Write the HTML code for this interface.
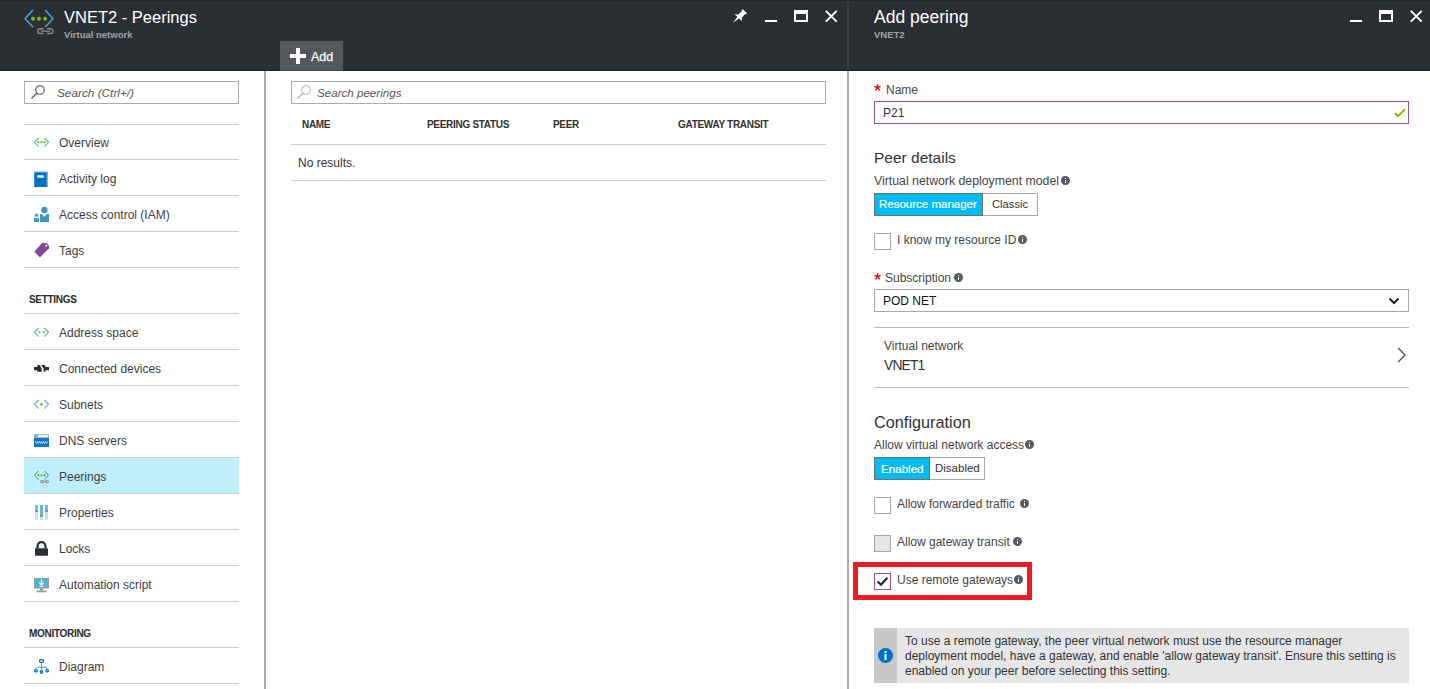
<!DOCTYPE html>
<html><head><meta charset="utf-8">
<style>
html,body{margin:0;padding:0;}
body{width:1430px;height:689px;overflow:hidden;position:relative;background:#fff;font-family:"Liberation Sans",sans-serif;color:#333;}
.a{position:absolute;}
.t{position:absolute;white-space:pre;line-height:normal;}
.hdr{left:0;top:0;width:1430px;height:71px;background:#2b2f34;}
.sep{position:absolute;height:1px;background:#cdcdcd;}
.mi{font-size:12px;color:#3e3e3e;left:59px;}
.sec{font-size:10px;font-weight:bold;color:#2a2a2a;left:29px;letter-spacing:-0.3px}
.th{font-size:10px;font-weight:bold;color:#323232;letter-spacing:-0.3px}
.lbl{font-size:12px;color:#444;}
.info{position:absolute;width:9px;height:9px;border-radius:50%;background:#59595e;}
.info:before{content:"";position:absolute;left:4px;top:2px;width:1px;height:1px;background:#fff;}
.info:after{content:"";position:absolute;left:4px;top:4px;width:1px;height:3px;background:#fff;}
.cb{position:absolute;width:15px;height:15px;border:1px solid #a7a7a7;background:#fff;}
</style></head><body>
<!-- header band -->
<div class="a hdr"></div>
<div class="a" style="left:847px;top:0;width:2px;height:71px;background:#3a3e43"></div>

<!-- left blade header -->
<svg class="a" style="left:20px;top:5px" width="40" height="35" viewBox="0 0 40 35">
  <polyline points="13,5.1 5,13.7 13,22.1" fill="none" stroke="#3fa9db" stroke-width="1.5"/>
  <polyline points="25.2,5.1 33,13.7 25.2,22.1" fill="none" stroke="#3fa9db" stroke-width="1.5"/>
  <circle cx="13" cy="13.7" r="2" fill="#7fba00"/>
  <circle cx="18.9" cy="13.7" r="2" fill="#7fba00"/>
  <circle cx="25.1" cy="13.7" r="2" fill="#7fba00"/>
  <path d="M23.6 23.8 H20 A2.35 2.35 0 0 0 20 28.5 H23.6" fill="none" stroke="#8c8c8c" stroke-width="1.4"/>
  <path d="M27 23.8 H30.6 A2.35 2.35 0 0 1 30.6 28.5 H27" fill="none" stroke="#8c8c8c" stroke-width="1.4"/>
  <rect x="21" y="25.5" width="9" height="1.3" fill="#8c8c8c"/>
</svg>
<div class="t" style="left:64px;top:8px;font-size:16.5px;color:#fff">VNET2 - Peerings</div>
<div class="t" style="left:64px;top:29px;font-size:9.5px;font-weight:bold;color:#9ea3a8">Virtual network</div>

<!-- window icons left -->
<svg class="a" style="left:728px;top:4px" width="24" height="24" viewBox="0 0 24 24"><path d="M14.5 4.9 L19.2 9.6 L16.4 10.8 L13.9 13.7 L13.8 17.1 L11 14.4 L5 18.8 L9.4 12.8 L6.3 10.3 L10.3 10.4 L13.2 7.7 Z" fill="#fff"/></svg>
<div class="a" style="left:765px;top:20px;width:12px;height:2px;background:#fff"></div>
<div class="a" style="left:794px;top:10px;width:10px;height:6px;border:2px solid #fff;border-top-width:4px"></div>
<svg class="a" style="left:825px;top:10px" width="13" height="13" viewBox="0 0 13 13"><path d="M0.8 0.8 L11.7 11.7 M11.7 0.8 L0.8 11.7" stroke="#fff" stroke-width="1.9"/></svg>

<!-- Add button -->
<div class="a" style="left:280px;top:41px;width:63px;height:29px;background:#54585d"></div>
<div class="a" style="left:0;top:70px;width:1430px;height:1px;background:#1c2024"></div>
<div class="a" style="left:280px;top:70px;width:63px;height:1px;background:#45494e"></div>
<div class="a" style="left:0;top:0;width:1430px;height:1px;background:#212529"></div>
<div class="a" style="left:290px;top:54px;width:16px;height:4px;background:#fff"></div><div class="a" style="left:296px;top:48px;width:4px;height:16px;background:#fff"></div>
<div class="t" style="left:311px;top:50px;font-size:12.5px;color:#fff;-webkit-text-stroke:0.25px #fff">Add</div>

<!-- right blade header -->
<div class="t" style="left:874px;top:7px;font-size:17.5px;color:#fff">Add peering</div>
<div class="t" style="left:874px;top:29px;font-size:9.5px;font-weight:bold;color:#9ea3a8">VNET2</div>
<div class="a" style="left:1350px;top:20px;width:12px;height:2px;background:#fff"></div>
<div class="a" style="left:1379px;top:10px;width:10px;height:6px;border:2px solid #fff;border-top-width:4px"></div>
<svg class="a" style="left:1410px;top:10px" width="13" height="13" viewBox="0 0 13 13"><path d="M0.8 0.8 L11.7 11.7 M11.7 0.8 L0.8 11.7" stroke="#fff" stroke-width="1.9"/></svg>

<!-- vertical dividers -->
<div class="a" style="left:264px;top:71px;width:2px;height:618px;background:#ababab"></div>
<div class="a" style="left:847px;top:71px;width:2px;height:618px;background:#ababab"></div>

<!-- LEFT MENU -->
<div class="a" style="left:24px;top:81px;width:213px;height:21px;border:1px solid #ababab"></div>
<svg class="a" style="left:30px;top:84px" width="16" height="16" viewBox="0 0 16 16"><circle cx="10" cy="6" r="4.3" fill="none" stroke="#555" stroke-width="1.1"/><path d="M7 9 L1.5 14.5" stroke="#555" stroke-width="1.2"/></svg>
<div class="t" style="left:57px;top:86px;font-size:11.8px;font-style:italic;color:#555">Search (Ctrl+/)</div>

<div class="sep" style="left:24px;top:124px;width:215px"></div>
<div class="sep" style="left:24px;top:159px;width:215px"></div>
<div class="sep" style="left:24px;top:195px;width:215px"></div>
<div class="sep" style="left:24px;top:231px;width:215px"></div>
<div class="sep" style="left:24px;top:267px;width:215px"></div>
<div class="t sec" style="top:294px">SETTINGS</div>
<div class="sep" style="left:24px;top:313px;width:215px"></div>
<div class="sep" style="left:24px;top:349px;width:215px"></div>
<div class="sep" style="left:24px;top:385px;width:215px"></div>
<div class="sep" style="left:24px;top:421px;width:215px"></div>
<div class="a" style="left:24px;top:458px;width:215px;height:35px;background:#c0eefa"></div>
<div class="sep" style="left:24px;top:457px;width:215px"></div>
<div class="sep" style="left:24px;top:493px;width:215px"></div>
<div class="sep" style="left:24px;top:529px;width:215px"></div>
<div class="sep" style="left:24px;top:565px;width:215px"></div>
<div class="sep" style="left:24px;top:601px;width:215px"></div>
<div class="t sec" style="top:628px">MONITORING</div>
<div class="sep" style="left:24px;top:647px;width:215px"></div>
<div class="sep" style="left:24px;top:683px;width:215px"></div>

<div class="t mi" style="top:136px">Overview</div>
<div class="t mi" style="top:172px">Activity log</div>
<div class="t mi" style="top:208px">Access control (IAM)</div>
<div class="t mi" style="top:244px">Tags</div>
<div class="t mi" style="top:326px">Address space</div>
<div class="t mi" style="top:362px">Connected devices</div>
<div class="t mi" style="top:398px">Subnets</div>
<div class="t mi" style="top:434px">DNS servers</div>
<div class="t mi" style="top:470px">Peerings</div>
<div class="t mi" style="top:506px">Properties</div>
<div class="t mi" style="top:542px">Locks</div>
<div class="t mi" style="top:578px">Automation script</div>
<div class="t mi" style="top:660px">Diagram</div>


<!-- menu icons -->
<svg class="a" style="left:33px;top:136px" width="18" height="13" viewBox="0 0 18 13">
  <polyline points="5.6,2 1.5,6.3 5.6,10.6" fill="none" stroke="#59b4d9" stroke-width="1.2"/>
  <polyline points="11.4,2 15.5,6.3 11.4,10.6" fill="none" stroke="#59b4d9" stroke-width="1.2"/>
  <path d="M4.5 6.3 H12.5" stroke="#b8dc7a" stroke-width="0.8"/>
  <circle cx="5.4" cy="6.3" r="1.1" fill="#7fba00"/><circle cx="8.5" cy="6.3" r="1.1" fill="#7fba00"/><circle cx="11.5" cy="6.3" r="1.1" fill="#7fba00"/>
</svg>
<svg class="a" style="left:34px;top:171px" width="15" height="16" viewBox="0 0 15 16">
  <rect x="0" y="0.5" width="14" height="15.5" fill="#7fb2dc"/>
  <rect x="0.5" y="1.5" width="12" height="14.5" fill="#0072c6"/>
  <rect x="3.3" y="4.3" width="6.6" height="2.4" rx="0.6" fill="#fff"/>
</svg>
<svg class="a" style="left:34px;top:206px" width="16" height="17" viewBox="0 0 16 17">
  <circle cx="10.4" cy="4" r="3.2" fill="#3999c6"/>
  <path d="M6 8 H8 L10.4 11 L12.8 8 H15 V16 H6 Z" fill="#3999c6"/>
  <circle cx="2.5" cy="9.2" r="1.6" fill="#3999c6"/>
  <path d="M0 11.5 H1.3 L2.5 12.8 L3.7 11.5 H5 V16 H0 Z" fill="#3999c6"/>
</svg>
<svg class="a" style="left:34px;top:242px" width="16" height="16" viewBox="0 0 16 16">
  <path d="M0.3 9.5 L8.2 0.9 H12.6 L15 3.4 V6.3 L5.9 15.6 Z" fill="#804998"/>
  <circle cx="12.3" cy="3.6" r="1.1" fill="#fff"/>
</svg>
<svg class="a" style="left:33px;top:326px" width="18" height="13" viewBox="0 0 18 13">
  <polyline points="5.6,2 1.5,6.3 5.6,10.6" fill="none" stroke="#59b4d9" stroke-width="1.2"/>
  <polyline points="11.4,2 15.5,6.3 11.4,10.6" fill="none" stroke="#59b4d9" stroke-width="1.2"/>
  <path d="M5.6 4.8 L8 6.3 L5.6 7.8 Z M11.4 4.8 L9 6.3 L11.4 7.8 Z" fill="#7fba00"/>
</svg>
<svg class="a" style="left:34px;top:364px" width="16" height="9" viewBox="0 0 16 9">
  <path d="M0 3 H3.3 V1 H5.6 L7.7 4.6 V7.8 H3.3 V6.3 H0 Z" fill="#2a2e35"/>
  <path d="M7.1 1 H10.4 Q11.4 1 11.4 2 V3 H15 V6.3 H11.4 V7.8 H9.6 V4.4 Z" fill="#2a2e35"/>
</svg>
<svg class="a" style="left:33px;top:398px" width="18" height="13" viewBox="0 0 18 13">
  <polyline points="5.6,2 1.5,6.3 5.6,10.6" fill="none" stroke="#59b4d9" stroke-width="1.2"/>
  <polyline points="11.4,2 15.5,6.3 11.4,10.6" fill="none" stroke="#59b4d9" stroke-width="1.2"/>
  <path d="M8.5 4.6 L10.2 6.3 L8.5 8 L6.8 6.3 Z" fill="#7fba00"/>
</svg>
<svg class="a" style="left:34px;top:434px" width="16" height="15" viewBox="0 0 16 15">
  <rect x="0" y="0" width="15" height="4" fill="#b9b9b9"/>
  <rect x="4" y="1" width="10" height="2" fill="#eee"/>
  <circle cx="2" cy="2" r="1.3" fill="#59b4d9"/>
  <rect x="0" y="4" width="15" height="9" fill="#0a78cf"/>
  <path d="M1.5 7 L2.5 9.5 L3.5 7.5 L4.5 9.5 L5.5 7 M5.5 7 L6.5 9.5 L7.5 7.5 L8.5 9.5 L9.5 7 M9.5 7 L10.5 9.5 L11.5 7.5 L12.5 9.5 L13.5 7" fill="none" stroke="#cfe6f7" stroke-width="0.8"/>
</svg>
<svg class="a" style="left:33px;top:469px" width="18" height="16" viewBox="0 0 18 16">
  <polyline points="5.6,2 1.5,6.3 5.6,10.6" fill="none" stroke="#59b4d9" stroke-width="1.2"/>
  <polyline points="11.4,2 15.5,6.3 11.4,10.6" fill="none" stroke="#59b4d9" stroke-width="1.2"/>
  <path d="M4.5 6.3 H12.5" stroke="#b8dc7a" stroke-width="0.8"/>
  <circle cx="5.4" cy="6.3" r="1.1" fill="#7fba00"/><circle cx="8.5" cy="6.3" r="1.1" fill="#7fba00"/><circle cx="11.5" cy="6.3" r="1.1" fill="#7fba00"/>
  <path d="M10.6 11.6 H8.3 A1.05 1.05 0 0 0 8.3 13.7 H10.6 M12.4 11.6 H14.7 A1.05 1.05 0 0 1 14.7 13.7 H12.4 M9.5 12.65 H13.5" fill="none" stroke="#8a8a8a" stroke-width="1"/>
</svg>
<svg class="a" style="left:34px;top:504px" width="16" height="17" viewBox="0 0 16 17">
  <rect x="1" y="1" width="3" height="15" fill="#c2e3f3"/><rect x="1.4" y="1" width="2.2" height="5.5" fill="#50b3e0"/><rect x="0.9" y="6" width="3.2" height="2" fill="#8f8f8f"/>
  <rect x="6" y="1" width="3" height="15" fill="#c2e3f3"/><rect x="6.2" y="1" width="2.6" height="10.5" fill="#50b3e0"/><rect x="5.9" y="11" width="3.2" height="2" fill="#8f8f8f"/>
  <rect x="11" y="1" width="3" height="15" fill="#c2e3f3"/><rect x="11.4" y="1" width="2.2" height="5.5" fill="#50b3e0"/><rect x="10.9" y="6" width="3.2" height="2" fill="#8f8f8f"/>
</svg>
<svg class="a" style="left:35px;top:541px" width="14" height="16" viewBox="0 0 14 16">
  <path d="M2.5 7.5 V5.2 A4 4 0 0 1 10.5 5.2 V7.5" fill="none" stroke="#2a2e35" stroke-width="2.2"/>
  <rect x="0" y="7.2" width="13" height="7.6" rx="0.8" fill="#2a2e35"/>
</svg>
<svg class="a" style="left:34px;top:577px" width="16" height="16" viewBox="0 0 16 16">
  <rect x="0" y="1" width="15" height="10.5" fill="#9a9a9a"/>
  <rect x="1" y="2" width="13" height="8.5" fill="#50b2de"/>
  <path d="M7.5 2.5 V8 M5.3 5.6 L7.5 7.9 L9.7 5.6" fill="none" stroke="#fff" stroke-width="1.2"/>
  <rect x="5.5" y="8.8" width="4" height="1" fill="#fff"/>
  <rect x="6" y="11.5" width="3" height="2" fill="#8a8a8a"/>
  <rect x="2.5" y="13.5" width="10" height="1.8" fill="#9a9a9a"/>
</svg>
<svg class="a" style="left:34px;top:658px" width="16" height="17" viewBox="0 0 16 17">
  <path d="M7.5 5 V12 M1.8 11 Q2.2 9.2 3.8 9.2 H11.2 Q12.8 9.2 13.2 11" fill="none" stroke="#4aa6d8" stroke-width="1"/>
  <rect x="5.65" y="1.65" width="3.7" height="2.7" rx="0.7" fill="none" stroke="#0a78cf" stroke-width="1.3"/>
  <rect x="0.65" y="11.65" width="2.4" height="2.1" rx="0.7" fill="#fff" stroke="#0a78cf" stroke-width="1.3"/>
  <rect x="6.55" y="12.65" width="1.9" height="2.6" rx="0.7" fill="#fff" stroke="#0a78cf" stroke-width="1.3"/>
  <rect x="12.05" y="11.65" width="2.3" height="2.1" rx="0.7" fill="#fff" stroke="#0a78cf" stroke-width="1.3"/>
</svg>

<!-- MIDDLE CONTENT -->
<div class="a" style="left:291px;top:81px;width:533px;height:21px;border:1px solid #ababab"></div>
<svg class="a" style="left:296px;top:84px" width="16" height="16" viewBox="0 0 16 16"><circle cx="10" cy="6" r="4.3" fill="none" stroke="#b4b4b4" stroke-width="1.1"/><path d="M7 9 L1.5 14.5" stroke="#b4b4b4" stroke-width="1.2"/></svg>
<div class="t" style="left:317px;top:86px;font-size:11.6px;font-style:italic;color:#555">Search peerings</div>
<div class="t th" style="left:302px;top:119px">NAME</div>
<div class="t th" style="left:427px;top:119px">PEERING STATUS</div>
<div class="t th" style="left:553px;top:119px">PEER</div>
<div class="t th" style="left:678px;top:119px">GATEWAY TRANSIT</div>
<div class="sep" style="left:291px;top:144px;width:535px"></div>
<div class="t" style="left:298px;top:156px;font-size:12px;color:#333">No results.</div>
<div class="sep" style="left:291px;top:180px;width:535px"></div>

<!-- RIGHT BLADE -->
<svg class="a" style="left:874px;top:84px" width="7" height="7" viewBox="0 0 7 7"><path d="M3.5 0.3 V3.6 M0.4 2.4 L3.5 3.6 L6.6 2.4 M1.5 6.4 L3.5 3.6 L5.5 6.4" fill="none" stroke="#e81123" stroke-width="1.5"/></svg>
<div class="t lbl" style="left:886px;top:83px">Name</div>
<div class="a" style="left:874px;top:101px;width:533px;height:21px;border:1px solid #9b4f96"></div>
<div class="t" style="left:883px;top:106px;font-size:12px;color:#333">P21</div>
<svg class="a" style="left:1394px;top:108px" width="12" height="10" viewBox="0 0 12 10"><path d="M1 5 L4.2 8.2 L11 1.2" fill="none" stroke="#7fba00" stroke-width="1.8"/></svg>

<div class="t" style="left:874px;top:149px;font-size:15.5px;color:#333">Peer details</div>
<div class="t lbl" style="left:874px;top:174px;font-size:12.3px">Virtual network deployment model</div>
<div class="info" style="left:1061px;top:176px"></div>
<div class="a" style="left:874px;top:193px;width:107px;height:21px;background:#00bcf2;border:1px solid #6f6f6f"></div>
<div class="a" style="left:983px;top:193px;width:54px;height:21px;border:1px solid #a7a7a7;border-left:none"></div>
<div class="t" style="left:879px;top:198px;font-size:11.5px;color:#fff;-webkit-text-stroke:0.2px #fff">Resource manager</div>
<div class="t" style="left:992px;top:198px;font-size:11.2px;color:#333">Classic</div>

<div class="cb" style="left:874px;top:233px"></div>
<div class="t lbl" style="left:897px;top:233px">I know my resource ID</div>
<div class="info" style="left:1018px;top:235px"></div>

<svg class="a" style="left:874px;top:273px" width="7" height="7" viewBox="0 0 7 7"><path d="M3.5 0.3 V3.6 M0.4 2.4 L3.5 3.6 L6.6 2.4 M1.5 6.4 L3.5 3.6 L5.5 6.4" fill="none" stroke="#e81123" stroke-width="1.5"/></svg>
<div class="t lbl" style="left:885px;top:271px">Subscription</div>
<div class="info" style="left:954px;top:273px"></div>
<div class="a" style="left:874px;top:289px;width:533px;height:21px;border:1px solid #a7a7a7"></div>
<div class="t" style="left:883px;top:294px;font-size:12px;color:#111">POD NET</div>
<svg class="a" style="left:1388px;top:297px" width="12" height="8" viewBox="0 0 12 8"><path d="M1.5 1.5 L6 6 L10.5 1.5" fill="none" stroke="#222" stroke-width="2"/></svg>
<div class="sep" style="left:874px;top:327px;width:535px;background:#b9b9b9"></div>
<div class="t lbl" style="left:884px;top:339px">Virtual network</div>
<div class="t" style="left:884px;top:358px;font-size:13.8px;letter-spacing:-0.8px;color:#333">VNET1</div>
<svg class="a" style="left:1397px;top:347px" width="10" height="16" viewBox="0 0 10 16"><path d="M1.2 1 L8 8 L1.2 15" fill="none" stroke="#505050" stroke-width="1.3"/></svg>
<div class="sep" style="left:874px;top:387px;width:535px;background:#b9b9b9"></div>

<div class="t" style="left:874px;top:413px;font-size:16.3px;color:#333">Configuration</div>
<div class="t lbl" style="left:874px;top:438px">Allow virtual network access</div>
<div class="info" style="left:1025px;top:440px"></div>
<div class="a" style="left:874px;top:457px;width:54px;height:21px;background:#00bcf2;border:1px solid #6f6f6f"></div>
<div class="a" style="left:930px;top:457px;width:54px;height:21px;border:1px solid #a7a7a7;border-left:none"></div>
<div class="t" style="left:881px;top:462px;font-size:11.6px;color:#fff;-webkit-text-stroke:0.2px #fff">Enabled</div>
<div class="t" style="left:935px;top:462px;font-size:11.5px;color:#333">Disabled</div>

<div class="cb" style="left:874px;top:497px"></div>
<div class="t lbl" style="left:897px;top:497px">Allow forwarded traffic</div>
<div class="info" style="left:1020px;top:499px"></div>
<div class="cb" style="left:874px;top:535px;background:#e6e6e6"></div>
<div class="t lbl" style="left:897px;top:535px">Allow gateway transit</div>
<div class="info" style="left:1013px;top:537px"></div>
<div class="a" style="left:853px;top:562px;width:169px;height:28px;border:5px solid #ed1c24"></div>
<div class="cb" style="left:874px;top:573px;border-color:#9b4f96"></div>
<svg class="a" style="left:875px;top:574px" width="15" height="15" viewBox="0 0 15 15"><path d="M2.6 7.6 L6 10.8 L12.3 3.8" fill="none" stroke="#23272d" stroke-width="2.1"/></svg>
<div class="t lbl" style="left:897px;top:573px">Use remote gateways</div>
<div class="info" style="left:1014px;top:575px"></div>

<div class="a" style="left:874px;top:628px;width:535px;height:55px;background:#e6e6e6"></div>
<div class="a" style="left:874px;top:628px;width:23px;height:55px;background:#c8c8c8"></div>
<svg class="a" style="left:878px;top:648px" width="15" height="15" viewBox="0 0 15 15"><circle cx="7.5" cy="7.5" r="7.5" fill="#0072c6"/><rect x="6.5" y="3" width="2" height="2" fill="#fff"/><rect x="6.5" y="6" width="2" height="6" fill="#fff"/></svg>
<div class="t" style="left:905px;top:634px;font-size:12px;color:#333;line-height:15px">To use a remote gateway, the peer virtual network must use the resource manager
deployment model, have a gateway, and enable 'allow gateway transit'. Ensure this setting is
enabled on your peer before selecting this setting.</div>

</body></html>
